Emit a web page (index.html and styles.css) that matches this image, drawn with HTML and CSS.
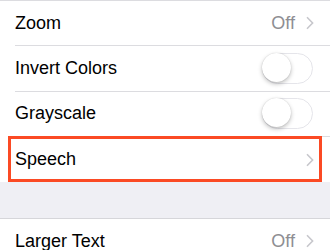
FILE: index.html
```html
<!DOCTYPE html>
<html>
<head>
<meta charset="utf-8">
<link rel="stylesheet" href="styles.css">
</head>
<body>
<div class="group inset-top">
  <div class="row">
    <span class="label">Zoom</span>
    <span class="accessory"><span class="value">Off</span><svg class="chev" width="8" height="14" viewBox="0 0 8 14"><path d="M1 1.2 L6.6 7 L1 12.8" fill="none" stroke="#c7c7cc" stroke-width="1.6"/></svg></span>
  </div>
  <div class="row">
    <span class="label">Invert Colors</span>
    <span class="toggle"><span class="knob"></span></span>
  </div>
  <div class="row">
    <span class="label">Grayscale</span>
    <span class="toggle"><span class="knob"></span></span>
  </div>
  <div class="row last highlighted">
    <span class="label">Speech</span>
    <span class="accessory"><svg class="chev" width="8" height="14" viewBox="0 0 8 14"><path d="M1 1.2 L6.6 7 L1 12.8" fill="none" stroke="#c7c7cc" stroke-width="1.6"/></svg></span>
    <span class="highlight-box"></span>
  </div>
</div>
<div class="gap"></div>
<div class="group full-top">
  <div class="row">
    <span class="label">Larger Text</span>
    <span class="accessory"><span class="value">Off</span><svg class="chev" width="8" height="14" viewBox="0 0 8 14"><path d="M1 1.2 L6.6 7 L1 12.8" fill="none" stroke="#c7c7cc" stroke-width="1.6"/></svg></span>
  </div>
</div>
</body>
</html>
```
FILE: styles.css
```css
html, body {
  margin: 0;
  padding: 0;
  background: #ffffff;
  overflow: hidden;
}
body {
  width: 330px;
  height: 250px;
  font-family: "Liberation Sans", Arial, sans-serif;
  font-size: 18px;
  color: #000000;
}
.group {
  background: #ffffff;
  padding-left: 15px;
}
.inset-top {
  border-top: 1px solid #dcdce0;
}
.full-top {
  border-top: 1px solid #d6d6da;
  margin-left: 0;
}
.row {
  position: relative;
  height: 45.3px;
  box-sizing: border-box;
  display: flex;
  align-items: center;
  justify-content: space-between;
  padding-right: 16px;
  border-bottom: 1px solid #dcdce0;
}
.row.last {
  border-bottom: none;
}
.label {
  letter-spacing: 0;
}
.accessory {
  display: flex;
  align-items: center;
  gap: 11px;
}
.value {
  color: #8e8e93;
}
.chev {
  display: block;
}
.toggle {
  position: relative;
  width: 51px;
  height: 31px;
  box-sizing: border-box;
  border: 1.5px solid #e5e5ea;
  border-radius: 16px;
  background: #ffffff;
  margin-right: 1px;
}
.knob {
  position: absolute;
  left: -1px;
  top: -1px;
  width: 29px;
  height: 29px;
  border-radius: 50%;
  background: #ffffff;
  box-shadow: 0 2px 4px rgba(0,0,0,0.25), 0 0 1px rgba(0,0,0,0.2);
}
.highlight-box {
  position: absolute;
  left: -7px;
  right: 8px;
  top: -1px;
  bottom: 0;
  border: 3px solid #fb4a24;
  box-sizing: border-box;
  pointer-events: none;
}
.gap {
  height: 36px;
  background: #efeff4;
}
```
